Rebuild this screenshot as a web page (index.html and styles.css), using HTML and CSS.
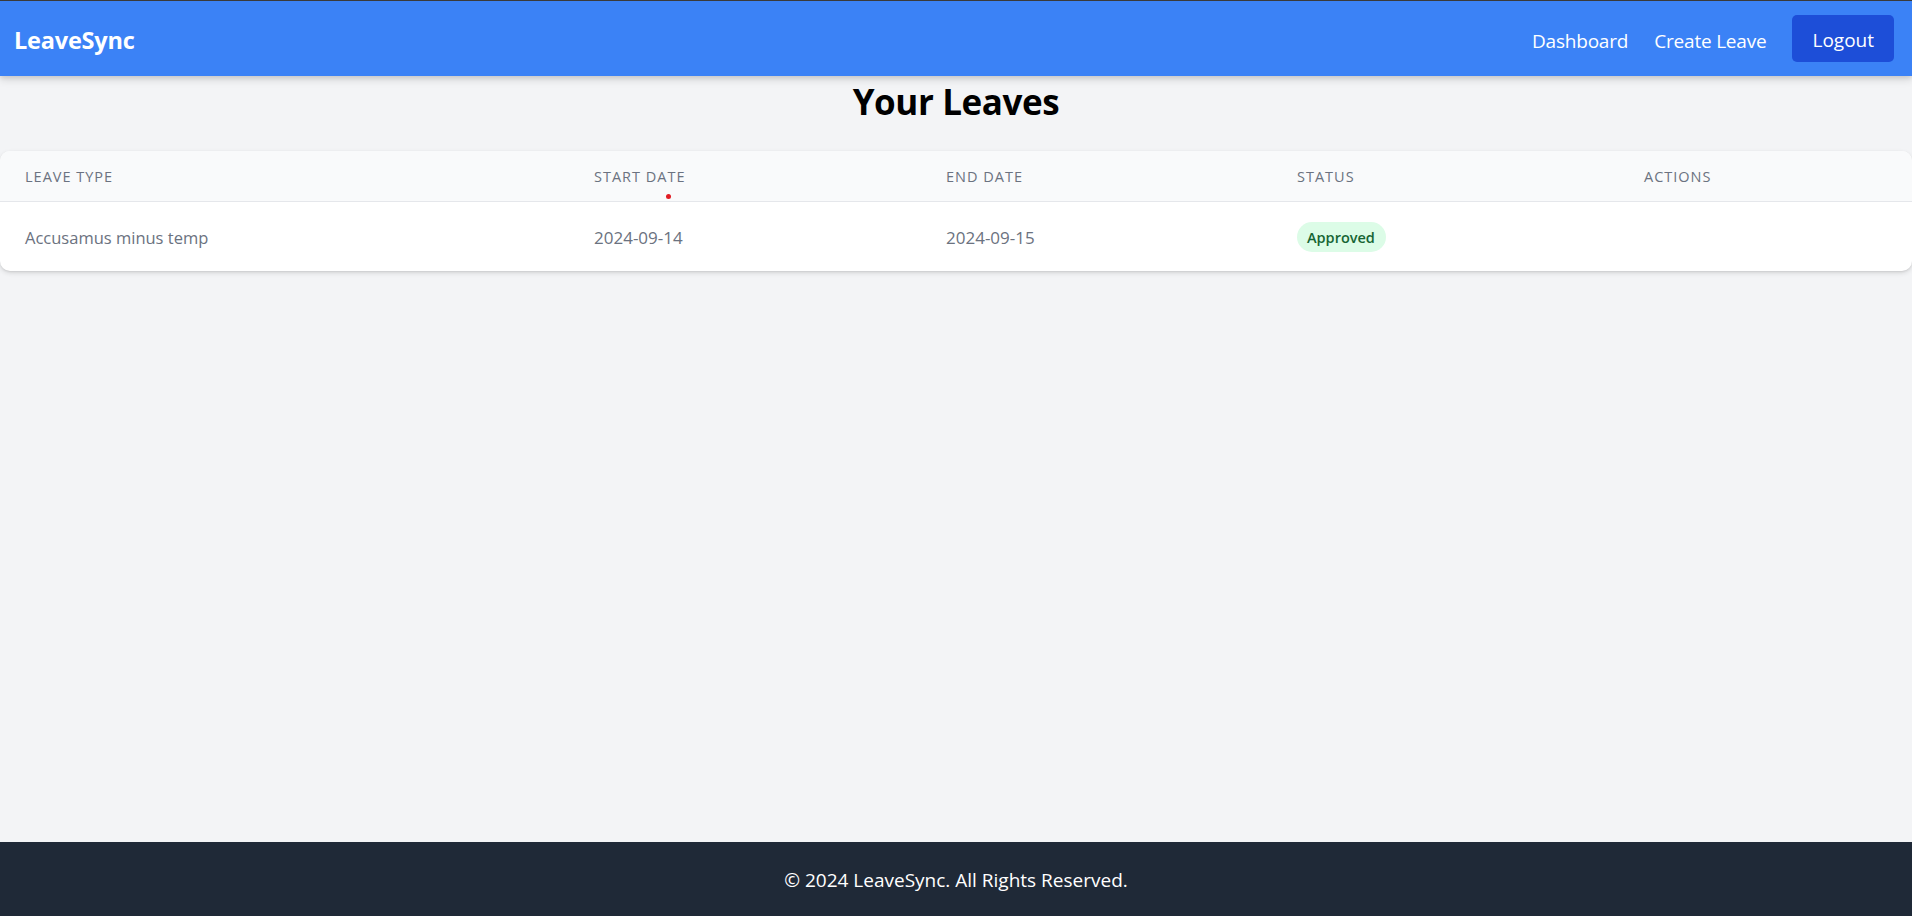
FILE: index.html
```html
<!DOCTYPE html>
<html lang="en">
<head>
<meta charset="utf-8">
<title>LeaveSync</title>
<link rel="stylesheet" href="styles.css">
</head>
<body>
<div class="page">
  <nav class="navbar">
    <a class="brand" href="#">LeaveSync</a>
    <div class="nav-links">
      <a class="nav-link" href="#">Dashboard</a>
      <a class="nav-link" href="#">Create Leave</a>
      <button class="logout" type="button">Logout</button>
    </div>
  </nav>
  <main class="main">
    <h1 class="title">Your Leaves</h1>
    <div class="card">
      <table class="leaves">
        <colgroup>
          <col class="c1"><col class="c2"><col class="c3"><col class="c4"><col class="c5">
        </colgroup>
        <thead>
          <tr>
            <th>Leave Type</th>
            <th>Start Date</th>
            <th>End Date</th>
            <th>Status</th>
            <th>Actions</th>
          </tr>
        </thead>
        <tbody>
          <tr>
            <td>Accusamus minus temp</td>
            <td>2024-09-14</td>
            <td>2024-09-15</td>
            <td><span class="badge">Approved</span></td>
            <td></td>
          </tr>
        </tbody>
      </table>
      <span class="dot"></span>
    </div>
  </main>
  <footer class="footer">© 2024 LeaveSync. All Rights Reserved.</footer>
</div>
</body>
</html>
```

FILE: styles.css
```css
* { box-sizing: border-box; }
html, body { margin: 0; padding: 0; }
body {
  font-family: "Open Sans", "Noto Sans", "Liberation Sans", sans-serif;
  background: #f3f4f6;
  color: #111827;
}
.page {
  min-height: 100vh;
  display: flex;
  flex-direction: column;
}
.navbar {
  height: 76px;
  border-top: 1px solid #3a3a3a;
  background: #3b82f6;
  display: flex;
  align-items: center;
  justify-content: space-between;
  padding: 2px 18px 0 14px;
  box-shadow: 0 4px 8px rgba(0,0,0,0.12), 0 2px 4px rgba(0,0,0,0.08);
  position: relative;
  z-index: 2;
}
.brand {
  color: #ffffff;
  text-decoration: none;
  font-weight: 700;
  font-size: 23.5px;
  letter-spacing: -0.2px;
}
.nav-links {
  display: flex;
  align-items: center;
  gap: 26px;
  margin-top: -2px;
}
.nav-link {
  color: #ffffff;
  text-decoration: none;
  font-size: 19px;
  letter-spacing: -0.2px;
  padding-top: 4px;
}
.logout {
  font-family: inherit;
  font-size: 19px;
  line-height: 27px;
  color: #ffffff;
  background: #1d4ed8;
  border: none;
  border-radius: 5px;
  padding: 12px 20px 8px;
  cursor: pointer;
}
.main {
  flex: 1;
}
.title {
  margin: 0 0 30px;
  height: 45px;
  line-height: 45px;
  padding-top: 3px;
  text-align: center;
  font-size: 35px;
  font-weight: 700;
  color: #000000;
  letter-spacing: -0.4px;
}
.card {
  position: relative;
  background: #ffffff;
  border-radius: 10px;
  overflow: hidden;
  box-shadow: 0 2px 5px rgba(0,0,0,0.12), 0 1px 2px rgba(0,0,0,0.08);
}
.leaves {
  width: 100%;
  border-collapse: collapse;
  table-layout: fixed;
}
.c1 { width: 569px; }
.c2 { width: 352px; }
.c3 { width: 351px; }
.c4 { width: 347px; }
.c5 { width: auto; }
.leaves thead tr {
  background: #f9fafb;
  border-bottom: 1px solid #e5e7eb;
}
.leaves th {
  height: 50px;
  padding: 2px 0 0 25px;
  text-align: left;
  font-size: 14.5px;
  font-weight: 500;
  text-transform: uppercase;
  letter-spacing: 1px;
  color: #6b7280;
}
.leaves td {
  height: 70px;
  padding: 2px 0 0 25px;
  font-size: 16.5px;
  color: #6b7280;
  white-space: nowrap;
}
.leaves td:nth-child(2), .leaves td:nth-child(3) {
  font-size: 17px;
}
.badge {
  display: inline-block;
  height: 30px;
  line-height: 31px;
  padding: 0 11px 0 10px;
  border-radius: 15px;
  background: #dcfce7;
  color: #166534;
  font-size: 14.5px;
  font-weight: 600;
}
.dot {
  position: absolute;
  left: 666px;
  top: 43px;
  width: 5px;
  height: 5px;
  border-radius: 50%;
  background: #e11d24;
}
.footer {
  height: 74px;
  background: #1f2937;
  color: #ffffff;
  display: flex;
  align-items: center;
  justify-content: center;
  font-size: 19px;
  padding-top: 1px;
}
```
